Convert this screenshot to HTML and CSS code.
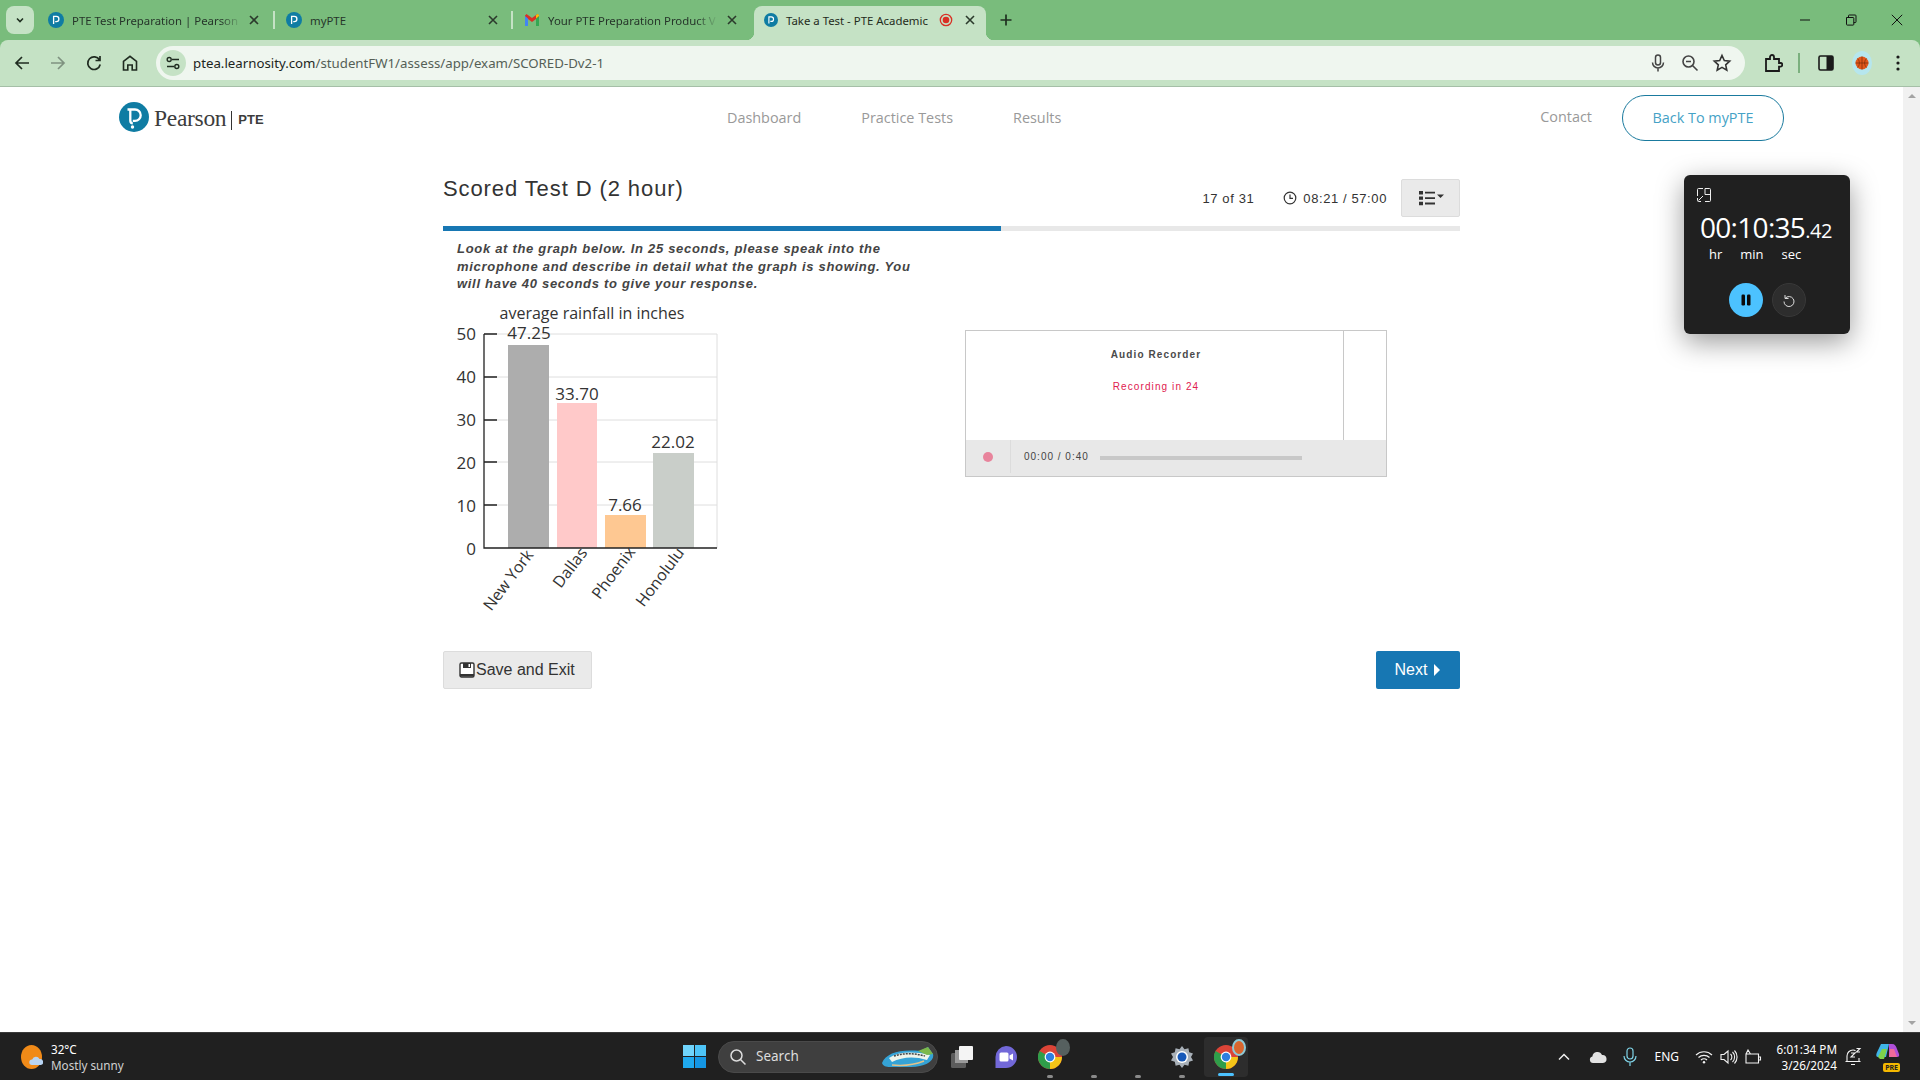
FILE: index.html
```html
<!DOCTYPE html>
<html lang="en">
<head>
<meta charset="utf-8">
<title>Take a Test - PTE Academic</title>
<link rel="stylesheet" href="styles.css">
</head>
<body>
<svg class="defs" width="0" height="0" aria-hidden="true">
  <defs>
    <symbol id="fav" viewBox="0 0 16 16">
      <circle cx="8" cy="8" r="8" fill="#0f7ca3"/>
      <path d="M5.600 12V4.400h2.700a2.600 2.600 0 0 1 0 5.200H7.200" fill="none" stroke="#fff" stroke-width="1.300"/>
    </symbol>
    <symbol id="x" viewBox="0 0 16 16">
      <path d="M4 4l8 8M12 4l-8 8" stroke="#2b3a2c" stroke-width="1.600" fill="none"/>
    </symbol>
    <symbol id="chrome" viewBox="0 0 24 24">
      <circle cx="12" cy="12" r="12" fill="#db4437"/>
      <path d="M12 12 1.600 6A12 12 0 0 0 12 24L18 13.500Z" fill="#2f9e4a"/>
      <path d="M12 12h12A12 12 0 0 1 12 24Z" fill="#f5c518"/>
      <circle cx="12" cy="12" r="5.400" fill="#fff"/>
      <circle cx="12" cy="12" r="4.200" fill="#2f7fe0"/>
    </symbol>
  </defs>
</svg>

<header class="browser">
  <div class="tabstrip">
    <div class="tab-menu">
      <svg viewBox="0 0 12 12" width="12" height="12"><path d="M3 4.500l3 3 3-3" fill="none" stroke="#1f2f20" stroke-width="1.600"/></svg>
    </div>
    <div class="tab tab-first">
      <svg class="favicon"><use href="#fav"/></svg>
      <span class="tab-title tab-fade">PTE Test Preparation | Pearson P</span>
      <svg class="tab-x"><use href="#x"/></svg>
    </div>
    <i class="tab-sep"></i>
    <div class="tab tab-second">
      <svg class="favicon"><use href="#fav"/></svg>
      <span class="tab-title">myPTE</span>
      <svg class="tab-x"><use href="#x"/></svg>
    </div>
    <i class="tab-sep"></i>
    <div class="tab tab-third">
      <svg class="favicon" viewBox="0 0 16 16">
        <path d="M1 3.500V14h3V7l4 3 4-3v7h3V3.500L13.500 2 8 6 2.500 2Z" fill="#d93025"/>
        <path d="M1 4v10h3V6.500Z" fill="#4285f4"/>
        <path d="M15 4v10h-3V6.500Z" fill="#34a853"/>
        <path d="M12 6.500l3-2.500V3l-1.500-1L12 3.200Z" fill="#fbbc04"/>
      </svg>
      <span class="tab-title tab-fade">Your PTE Preparation Product V</span>
      <svg class="tab-x"><use href="#x"/></svg>
    </div>
    <div class="tab tab-active">
      <svg class="favicon favicon-small"><use href="#fav"/></svg>
      <span class="tab-title">Take a Test - PTE Academic</span>
      <svg class="tab-rec" viewBox="0 0 14 14" width="14" height="14"><circle cx="7" cy="7" r="5.700" fill="none" stroke="#d93025" stroke-width="1.300"/><circle cx="7" cy="7" r="3.300" fill="#d93025"/></svg>
      <svg class="tab-x"><use href="#x"/></svg>
    </div>
    <svg class="new-tab" viewBox="0 0 16 16" width="16" height="16"><path d="M8 2.500v11M2.500 8h11" stroke="#1f2f20" stroke-width="1.700"/></svg>
    <div class="win-controls">
      <span class="win-btn"><svg viewBox="0 0 12 12" width="12" height="12"><path d="M1 6h10" stroke="#111" stroke-width="1"/></svg></span>
      <span class="win-btn"><svg viewBox="0 0 12 12" width="12" height="12"><path d="M1.500 3.500h6.500a.8.800 0 0 1 .8.800v6a.8.800 0 0 1-.8.800H2.300a.8.800 0 0 1-.8-.8ZM3.500 3.500V1.800a.8.800 0 0 1 .8-.8h5.900a.8.800 0 0 1 .8.800v6a.8.800 0 0 1-.8.800H8.800" fill="none" stroke="#111"/></svg></span>
      <span class="win-btn"><svg viewBox="0 0 12 12" width="12" height="12"><path d="M.8.800l10.400 10.400M11.200.8.800 11.200" stroke="#111" stroke-width="1"/></svg></span>
    </div>
  </div>
  <div class="toolbar">
    <svg class="tool" viewBox="0 0 20 20"><path d="M17 10H4M10 4l-6 6 6 6" fill="none" stroke="#1f2b20" stroke-width="1.700"/></svg>
    <svg class="tool" viewBox="0 0 20 20"><path d="M3 10h13M10 4l6 6-6 6" fill="none" stroke="#7f9280" stroke-width="1.700"/></svg>
    <svg class="tool" viewBox="0 0 20 20"><path d="M15.500 7A6.300 6.300 0 1 0 16.200 11.500M16 3v4.500h-4.500" fill="none" stroke="#1f2b20" stroke-width="1.700"/></svg>
    <svg class="tool" viewBox="0 0 20 20"><path d="M3.500 17V8.500L10 3.300l6.500 5.200V17h-4.300v-5H7.800v5Z" fill="none" stroke="#1f2b20" stroke-width="1.600"/></svg>
    <div class="omnibox">
      <span class="tune">
        <svg viewBox="0 0 16 16" width="16" height="16"><path d="M7 4.500h7M2 11.500h7" stroke="#1f2b20" stroke-width="1.400"/><circle cx="4.200" cy="4.500" r="2" fill="none" stroke="#1f2b20" stroke-width="1.400"/><circle cx="11.800" cy="11.500" r="2" fill="none" stroke="#1f2b20" stroke-width="1.400"/></svg>
      </span>
      <span class="url"><b class="url-host">ptea.learnosity.com</b>/studentFW1/assess/app/exam/SCORED-Dv2-1</span>
      <span class="omni-icons">
        <svg class="tool" viewBox="0 0 20 20"><rect x="7.500" y="2" width="5" height="10" rx="2.500" fill="none" stroke="#444" stroke-width="1.500"/><path d="M4.500 9.500a5.500 5.500 0 0 0 11 0M10 15v3.500" fill="none" stroke="#444" stroke-width="1.500"/></svg>
        <svg class="tool" viewBox="0 0 20 20"><circle cx="8.500" cy="8.500" r="5.500" fill="none" stroke="#444" stroke-width="1.600"/><path d="M12.500 12.500l5 5M6 8.500h5" stroke="#444" stroke-width="1.600"/></svg>
        <svg class="tool" viewBox="0 0 20 20"><path d="M10 2.500l2.300 5 5.400.6-4 3.700 1.100 5.400-4.800-2.800-4.800 2.800 1.100-5.400-4-3.700 5.400-.6Z" fill="none" stroke="#333" stroke-width="1.600"/></svg>
      </span>
    </div>
    <svg class="tool tool-ext" viewBox="0 0 20 20"><path d="M3 6h4V4a2 2 0 0 1 4 0v2h5v4h1.500a1.800 1.800 0 0 1 0 3.600H16V18H3Z" fill="none" stroke="#1a1a1a" stroke-width="1.800"/></svg>
    <i class="tool-sep"></i>
    <svg class="tool tool-side" viewBox="0 0 20 20"><rect x="3" y="3" width="14" height="14" rx="1.500" fill="none" stroke="#1a1a1a" stroke-width="1.600"/><rect x="10.500" y="3" width="6.500" height="14" fill="#1a1a1a"/></svg>
    <span class="avatar"><svg viewBox="0 0 14 14" width="14" height="14"><circle cx="7" cy="7" r="6.500" fill="#e2571c"/><path d="M7 .5v13M.5 7h13M2.500 2.500C5 5 5 9 2.500 11.500M11.500 2.500C9 5 9 9 11.500 11.500" fill="none" stroke="#7a2c0a" stroke-width=".7"/></svg></span>
    <svg class="tool tool-menu" viewBox="0 0 20 20"><circle cx="10" cy="4" r="1.600" fill="#1a1a1a"/><circle cx="10" cy="10" r="1.600" fill="#1a1a1a"/><circle cx="10" cy="16" r="1.600" fill="#1a1a1a"/></svg>
  </div>
</header>

<div class="viewport">
  <main class="page">
    <nav class="site-head">
      <div class="brand">
        <svg class="brand-mark" viewBox="0 0 30 30" width="30" height="30">
          <circle cx="15" cy="15" r="15" fill="#0f7ca3"/>
          <path d="M8.500 7.500H16a5.700 5.700 0 0 1 0 11.400h-2.200" fill="none" stroke="#fff" stroke-width="2.300"/>
          <path d="M11.300 7.500V18.500c0 1.800 .8 2.800 2.500 2.800" fill="none" stroke="#fff" stroke-width="2.300"/>
          <circle cx="13.500" cy="25" r="1.700" fill="#fff"/>
        </svg>
        <span class="brand-name">Pearson</span>
        <i class="brand-bar"></i>
        <span class="brand-pte">PTE</span>
      </div>
      <ul class="site-links">
        <li>Dashboard</li>
        <li>Practice Tests</li>
        <li>Results</li>
      </ul>
      <div class="site-right">
        <span class="contact">Contact</span>
        <span class="back-btn">Back To myPTE</span>
      </div>
    </nav>

    <section class="exam">
      <div class="exam-head">
        <h1 class="exam-title">Scored Test D (2 hour)</h1>
        <div class="exam-meta">
          <span class="count">17 of 31</span>
          <span class="clock">
            <svg viewBox="0 0 14 14" width="14" height="14"><circle cx="7" cy="7" r="5.800" fill="none" stroke="#333" stroke-width="1.200"/><path d="M7 3.500V7.400H10" fill="none" stroke="#333" stroke-width="1.200"/></svg>
            08:21 / 57:00
          </span>
          <span class="list-btn">
            <svg viewBox="0 0 26 16" width="26" height="16"><path d="M1 1h4v3.400H1ZM1 6.400h4v3.400H1ZM1 11.800h4v3.400H1Z" fill="#333"/><path d="M7 2.700h10M7 8.100h10M7 13.500h10" stroke="#333" stroke-width="1.800"/><path d="M19 4.500h7l-3.500 3.500Z" fill="#333"/></svg>
          </span>
        </div>
      </div>
      <div class="progress"><div class="progress-fill" style="width:54.900%"></div></div>

      <div class="exam-body">
        <div class="col-left">
          <p class="prompt">Look at the graph below. In 25 seconds, please speak into the microphone and describe in detail what the graph is showing. You will have 40 seconds to give your response.</p>
          <svg class="chart" viewBox="430 295 320 330" width="320" height="330">
            <g class="grid-lines">
              <path d="M484 334H717M484 377H717M484 420H717M484 462H717M484 505H717M717 334V548"/>
            </g>
            <rect x="508" y="345" width="41" height="203" fill="#adadad"/>
            <rect x="557" y="403" width="40" height="145" fill="#ffc9c9"/>
            <rect x="605" y="515" width="41" height="33" fill="#fec892"/>
            <rect x="653" y="453" width="41" height="95" fill="#c9cec9"/>
            <path class="axis" d="M484 334V548H717M484 334H497M484 377H497M484 420H497M484 462H497M484 505H497"/>
            <g class="chart-text">
              <text x="592" y="319" text-anchor="middle" class="chart-title">average rainfall in inches</text>
              <text x="476" y="340" text-anchor="end">50</text>
              <text x="476" y="383" text-anchor="end">40</text>
              <text x="476" y="426" text-anchor="end">30</text>
              <text x="476" y="469" text-anchor="end">20</text>
              <text x="476" y="512" text-anchor="end">10</text>
              <text x="476" y="555" text-anchor="end">0</text>
              <text x="529" y="339" text-anchor="middle">47.25</text>
              <text x="577" y="400" text-anchor="middle">33.70</text>
              <text x="625" y="511" text-anchor="middle">7.66</text>
              <text x="673" y="448" text-anchor="middle">22.02</text>
              <text class="chart-cat" text-anchor="end" transform="translate(534 555) rotate(-53)">New York</text>
              <text class="chart-cat" text-anchor="end" transform="translate(588 553) rotate(-53)">Dallas</text>
              <text class="chart-cat" text-anchor="end" transform="translate(636 552) rotate(-53)">Phoenix</text>
              <text class="chart-cat" text-anchor="end" transform="translate(685 553) rotate(-53)">Honolulu</text>
            </g>
          </svg>
        </div>
        <div class="col-right">
          <div class="recorder">
            <div class="rec-top">
              <div class="rec-main">
                <div class="rec-title">Audio Recorder</div>
                <div class="rec-count">Recording in 24</div>
              </div>
              <div class="rec-side"></div>
            </div>
            <div class="rec-bar">
              <div class="rec-dot-cell"><i class="rec-dot"></i></div>
              <span class="rec-time">00:00 / 0:40</span>
              <i class="rec-track"></i>
            </div>
          </div>
        </div>
      </div>

      <div class="exam-actions">
        <span class="btn btn-save">
          <svg viewBox="0 0 16 16" width="16" height="16"><path d="M1 2.500A1.500 1.500 0 0 1 2.500 1h11A1.500 1.500 0 0 1 15 2.500v11a1.500 1.500 0 0 1-1.500 1.500h-11A1.500 1.500 0 0 1 1 13.500Z" fill="#fff" stroke="#333" stroke-width="1.400"/><path d="M4 1h8v5H4Z" fill="#333"/><path d="M9.500 2h1.500v3H9.500Z" fill="#fff"/><path d="M1 12h14v2.500H1Z" fill="#333"/></svg>Save and Exit
        </span>
        <span class="btn btn-next">Next<svg viewBox="0 0 8 14" width="8" height="14"><path d="M1 1l6 6-6 6Z" fill="#fff"/></svg></span>
      </div>
    </section>
  </main>
  <aside class="scrollbar">
    <i class="sb-up"></i>
    <i class="sb-down"></i>
  </aside>
</div>

<aside class="stopwatch">
  <svg class="sw-expand" viewBox="0 0 14 14" width="14" height="14"><path d="M6 .5H1.500a1 1 0 0 0-1 1V8M8 13.500h4.500a1 1 0 0 0 1-1V1.500a1 1 0 0 0-1-1H8M.5 10v2.500a1 1 0 0 0 1 1H4M1.500 12.500 6 8M8 .5v6h5.500" fill="none" stroke="#eee" stroke-width="1"/></svg>
  <div class="sw-time">00:10:35<small>.42</small></div>
  <div class="sw-labels"><span>hr</span><span>min</span><span>sec</span></div>
  <div class="sw-buttons">
    <span class="sw-pause"><svg viewBox="0 0 14 14" width="14" height="14"><rect x="2.500" y="1.500" width="3.500" height="11" rx="1.200" fill="#0b0b0b"/><rect x="8" y="1.500" width="3.500" height="11" rx="1.200" fill="#0b0b0b"/></svg></span>
    <span class="sw-reset"><svg viewBox="0 0 14 14" width="14" height="14"><path d="M3 2v3.500h3.500M3.200 5.300A5 5 0 1 1 2 8.500" fill="none" stroke="#ddd" stroke-width="1"/></svg></span>
  </div>
</aside>

<footer class="taskbar">
  <div class="tb-weather">
    <svg viewBox="0 0 22 24" width="22" height="24">
      <ellipse cx="10.500" cy="12" rx="10.500" ry="12" fill="#f08a18"/>
      <path d="M11 20a2.800 2.800 0 0 1 .2-5.600 4 4 0 0 1 7.300-.4 3 3 0 0 1 1.200 6Z" fill="#b8d4f2"/>
    </svg>
    <div class="tb-weather-text"><span class="tb-temp">32°C</span><span class="tb-cond">Mostly sunny</span></div>
  </div>
  <svg class="tb-win" viewBox="0 0 23 23" width="23" height="23">
    <rect width="11" height="11" fill="#6fd4fb"/><rect x="12" width="11" height="11" fill="#4dc4f7"/><rect y="12" width="11" height="11" fill="#1fa9ee"/><rect x="12" y="12" width="11" height="11" fill="#1496e4"/>
  </svg>
  <div class="tb-search">
    <svg viewBox="0 0 18 18" width="18" height="18"><circle cx="7.500" cy="7.500" r="5.500" fill="none" stroke="#ddd" stroke-width="1.500"/><path d="M11.500 11.500l5 5" stroke="#ddd" stroke-width="1.500"/></svg>
    <span class="tb-search-text">Search</span>
    <svg class="tb-search-art" viewBox="0 0 52 22" width="52" height="22">
      <path d="M0 17C4 7 18 3 38 5L46 1l5 7c2 7-8 13-22 13H8C4 21 1 20 0 17Z" fill="#35a3d6"/>
      <path d="M7 12C16 6 30 5 48 9l-3 5C32 10 20 11 10 16Z" fill="#eef4ea"/>
      <path d="M12 10c9-3 20-3 31 0" fill="none" stroke="#444" stroke-width="1.500" stroke-dasharray="2 1"/>
      <path d="M36 5L46 1l5 7-6 1Z" fill="#7cb84a"/>
      <path d="M10 19c10 1 22 0 32-4" fill="none" stroke="#e2c28a" stroke-width="1.500"/>
    </svg>
  </div>
  <div class="tb-apps">
    <span class="tb-app">
      <svg viewBox="0 0 24 24" width="24" height="24"><rect x="1" y="8" width="15" height="15" rx="1.500" fill="#5c5c5c"/><rect x="5" y="5" width="13" height="13" fill="#9a9a9a"/><rect x="9" y="1" width="14" height="14" rx="1" fill="#f4f4f4"/></svg>
    </span>
    <span class="tb-app">
      <svg viewBox="0 0 24 24" width="24" height="24"><path d="M12 1a11 11 0 0 1 0 22H1.500v-11A11 11 0 0 1 12 1Z" fill="#7268d8"/><rect x="5.500" y="7.500" width="9" height="9" rx="1.500" fill="#fff"/><path d="M15.500 10.500l3.500-2v7l-3.500-2Z" fill="#fff"/></svg>
    </span>
    <span class="tb-app tb-open">
      <svg width="24" height="24"><use href="#chrome"/></svg>
      <i class="tb-avatar tb-avatar-photo"></i>
    </span>
    <span class="tb-app tb-open"></span>
    <span class="tb-app tb-open"></span>
    <span class="tb-app tb-open">
      <svg viewBox="0 0 24 24" width="24" height="24"><path d="M12 1l2.500 3.200 3.900-1 .8 4 3.800 1.400L21 12l2 3.400-3.800 1.400-.8 4-3.900-1L12 23l-2.500-3.200-3.900 1-.8-4L1 15.400 3 12 1 8.600l3.800-1.400.8-4 3.900 1Z" fill="#a8b0b8"/><circle cx="12" cy="12" r="6" fill="#fff"/><circle cx="12" cy="12" r="4.500" fill="#1658b8"/></svg>
    </span>
    <span class="tb-app tb-active">
      <svg width="24" height="24"><use href="#chrome"/></svg>
      <i class="tb-avatar tb-avatar-ball"></i>
    </span>
  </div>
  <div class="tray">
    <svg class="tray-chev" viewBox="0 0 14 14" width="14" height="14"><path d="M2 9.500 7 4.500l5 5" fill="none" stroke="#eee" stroke-width="1.500"/></svg>
    <svg class="tray-cloud" viewBox="0 0 18 14" width="18" height="14"><path d="M4 13a3.300 3.300 0 0 1-.6-6.500A5 5 0 0 1 13 5a4 4 0 0 1 1 8Z" fill="#e2e2e2"/></svg>
    <svg class="tray-mic" viewBox="0 0 14 20" width="14" height="20"><rect x="4" y="1" width="6" height="11" rx="3" fill="none" stroke="#7fd4e8" stroke-width="1.200"/><path d="M1 9a6 6 0 0 0 12 0M7 15v4" fill="none" stroke="#7fd4e8" stroke-width="1.200"/></svg>
    <span class="tray-lang">ENG</span>
    <svg class="tray-wifi" viewBox="0 0 18 14" width="18" height="14"><path d="M1 5a11.500 11.500 0 0 1 16 0M3.500 7.500a8 8 0 0 1 11 0M6 10a4.300 4.300 0 0 1 6 0" fill="none" stroke="#f2f2f2" stroke-width="1.200"/><circle cx="9" cy="12.300" r="1.200" fill="#f2f2f2"/></svg>
    <svg class="tray-vol" viewBox="0 0 18 16" width="18" height="16"><path d="M1 5.500h3L8 2v12L4 10.500H1Z" fill="none" stroke="#f2f2f2" stroke-width="1.100"/><path d="M10.500 5a4 4 0 0 1 0 6M12.500 3a7 7 0 0 1 0 10M14.500 1.500a9.500 9.500 0 0 1 0 13" fill="none" stroke="#f2f2f2" stroke-width="1.100"/></svg>
    <svg class="tray-batt" viewBox="0 0 18 16" width="18" height="16"><path d="M2 5h12.500v9H2ZM14.500 8h2v3h-2M2 5l2-4 2.500 4" fill="none" stroke="#f2f2f2" stroke-width="1.100"/></svg>
    <div class="tray-clock"><span>6:01:34 PM</span><span>3/26/2024</span></div>
    <svg class="tray-bell" viewBox="0 0 18 20" width="18" height="20"><path d="M3 14V9a6 6 0 0 1 6-6M9 3c1.500 0 2 .3 2.500.8M15 14v-3M1.500 14.500h15M7 17.500h4" fill="none" stroke="#f2f2f2" stroke-width="1.100"/><path d="M7 6h4l-4 4h4M12.500 1.500h3.500l-3.500 3.500h3.500" fill="none" stroke="#f2f2f2" stroke-width="1.100"/></svg>
    <span class="tray-copilot">
      <svg viewBox="0 0 24 20" width="24" height="20"><path d="M5 1h8l-3 13H2C0 14 0 12 .7 10Z" fill="#3fb4e8"/><path d="M13 1h3c3 0 4 2 5 5l2 5c.5 2 0 3-2 3h-8Z" fill="#b04fd8"/><path d="M2 14l4-8h5l-3 10H4Z" fill="#7fd14a"/><path d="M14 6h4l3 8h-8Z" fill="#f06a9a"/></svg>
      <b class="tray-pre">PRE</b>
    </span>
  </div>
</footer>
</body>
</html>
```

FILE: styles.css
```css
* { box-sizing: border-box; }
html, body { margin: 0; height: 100%; }
body {
  display: flex;
  flex-direction: column;
  height: 1080px;
  overflow: hidden;
  position: relative;
  background: #fff;
  font-family: "Liberation Sans", Arial, sans-serif;
  color: #333;
}
.defs { position: absolute; }
i { display: block; }

/* browser chrome */
.browser { background: #79bc7c; flex: none; font-family: "Noto Sans", sans-serif; }
.tabstrip { display: flex; align-items: stretch; height: 40px; padding: 6px 0 0 6px; }
.tab-menu {
  width: 28px; height: 28px; margin-right: 6px; border-radius: 8px; background: #c5e2c5;
  display: flex; align-items: center; justify-content: center;
}
.tab { display: flex; align-items: center; height: 28px; font-size: 11.400px; color: #26352a; }
.tab-first { width: 233px; padding: 0 11px 0 8px; }
.tab-second { width: 236px; padding: 0 10px 0 11px; }
.tab-third { width: 233px; padding: 0 6px 0 11px; margin-right: 8px; }
.tab-active {
  width: 232px; height: 34px; padding: 0 8px 6px 10px; background: #c5e2c5;
  border-radius: 8px 8px 0 0; position: relative; color: #1f2b20;
}
.tab-active::before, .tab-active::after {
  content: ""; position: absolute; bottom: 0; width: 8px; height: 8px;
}
.tab-active::before { left: -8px; background: radial-gradient(circle at 0 0, transparent 8px, #c5e2c5 8.500px); }
.tab-active::after { right: -8px; background: radial-gradient(circle at 100% 0, transparent 8px, #c5e2c5 8.500px); }
.favicon { width: 16px; height: 16px; flex: none; margin-right: 8px; }
.favicon-small { width: 14px; margin-right: 8px; }
.tab-title { flex: 1; white-space: nowrap; min-width: 0; }
.tab-fade { -webkit-mask-image: linear-gradient(90deg, #000 calc(100% - 22px), transparent 100%); mask-image: linear-gradient(90deg, #000 calc(100% - 22px), transparent 100%); flex: none; width: 170px; margin-right: auto; }
.tab-x { width: 16px; height: 16px; flex: none; }
.tab-rec { flex: none; margin: 0 9px 0 6px; }
.tab-sep { width: 2px; height: 18px; margin-top: 5px; background: #c5e2c5; }
.new-tab { margin: 6px 0 0 12px; }
.win-controls { display: flex; margin-left: auto; margin-top: -6px; }
.win-btn { width: 46px; height: 40px; display: flex; align-items: center; justify-content: center; }

.toolbar {
  display: flex; align-items: center; height: 47px; padding: 0 0 1px 12px;
  background: #c5e2c5; border-bottom: 1px solid #a5bfa7; border-radius: 8px 8px 0 0;
}
.tool { width: 20px; height: 20px; flex: none; margin-right: 16px; }
.omnibox {
  flex: 1; height: 34px; display: flex; align-items: center; padding: 0 1px 0 4px;
  background: #eff6ef; border-radius: 17px; margin-right: 18px;
}
.tune {
  width: 26px; height: 26px; border-radius: 50%; background: #c5e2c5; flex: none;
  display: flex; align-items: center; justify-content: center; margin-right: 7px;
}
.url { font-size: 13.260px; color: #555f56; white-space: nowrap; }
.url-host { font-weight: 400; color: #1c251d; }
.omni-icons { display: flex; margin-left: auto; }
.omni-icons .tool { margin-right: 12px; }
.tool-ext { margin-right: 15px; }
.tool-sep { width: 2px; height: 20px; background: #7bb07e; margin-right: 16px; flex: none; }
.avatar {
  width: 20px; height: 24px; border-radius: 50%; background: #b6e6ee; flex: none; margin-right: 16px;
  display: flex; align-items: center; justify-content: center;
}
.tool-side { margin-right: 16px; }
.tool-menu { margin-right: 12px; }

/* page */
.viewport { flex: 1; display: flex; min-height: 0; }
.page { flex: 1; min-width: 0; }
.scrollbar {
  width: 17px; background: #f1f1f1; display: flex; flex-direction: column;
  justify-content: space-between; align-items: center; padding: 7px 0;
}
.sb-up, .sb-down { width: 0; height: 0; border-left: 4px solid transparent; border-right: 4px solid transparent; }
.sb-up { border-bottom: 4px solid #a3a3a3; }
.sb-down { border-top: 4px solid #a3a3a3; }

.site-head {
  height: 73px; padding: 8px 119px 19px 119px; display: flex; align-items: center;
  font-family: "Open Sans", sans-serif; font-size: 14.400px;
}
.brand { display: flex; align-items: center; width: 608px; flex: none; color: #3c3c3c; }
.brand-mark { flex: none; margin-right: 5px; margin-top: -2px; }
.brand-name { font-family: "Liberation Serif", serif; font-size: 23.500px; letter-spacing: -.3px; }
.brand-bar { width: 1px; height: 19px; background: #333; margin: 4px 6px 0 5px; }
.brand-pte { font-family: "Liberation Sans", sans-serif; font-weight: 700; font-size: 13px; margin-top: 3px; }
.site-links { display: flex; gap: 60px; list-style: none; margin: -2px 0 0; padding: 0; color: #999; }
.site-right { display: flex; align-items: center; gap: 30px; margin-left: auto; }
.contact { color: #999; margin-top: -4px; }
.back-btn {
  width: 162px; height: 46px; border: 1px solid #1a7a9e; border-radius: 23px; padding-bottom: 2px;
  display: flex; align-items: center; justify-content: center; color: #45a2c6;
}

.exam { width: 1017px; margin-left: 443px; }
.exam-head { display: flex; justify-content: space-between; height: 66px; }
.exam-title { margin: 16px 0 0; font-size: 22px; line-height: 26px; font-weight: 400; letter-spacing: .9px; color: #333; }
.exam-meta { display: flex; align-items: center; font-size: 13px; letter-spacing: .6px; margin-top: 19px; height: 38px; }
.count { margin-right: 29px; }
.clock { display: flex; align-items: center; gap: 6px; margin-right: 14px; }
.list-btn {
  width: 59px; height: 38px; background: #eaeaea; border: 1px solid #dcdcdc; border-radius: 2px;
  display: flex; align-items: center; justify-content: center;
}
.progress { height: 5px; background: #e8e8e8; }
.progress-fill { height: 100%; background: #1777b3; }

.exam-body { display: flex; height: 420px; }
.col-left { width: 522px; padding-top: 9px; flex: none; }
.prompt {
  width: 470px; margin: 0 0 0 14px; font-size: 13px; line-height: 17.500px; font-weight: 700;
  font-style: italic; letter-spacing: .7px; color: #444;
}
.chart { display: block; margin: 2px 0 0 -13px; }
.grid-lines path { fill: none; stroke: #dedede; stroke-width: 1; }
.axis { fill: none; stroke: #222; stroke-width: 1.300; }
.chart-text text { font-family: "Open Sans", sans-serif; font-size: 17px; fill: #333; }
.chart-text .chart-title { font-size: 16px; }
.chart-text .chart-cat { font-size: 16px; }
.col-right { padding-top: 99px; }
.recorder { width: 422px; height: 147px; border: 1px solid #c8c8c8; display: flex; flex-direction: column; }
.rec-top { flex: 1; display: flex; }
.rec-main { flex: 1; text-align: center; padding: 18px 0 0 3px; }
.rec-side { width: 43px; border-left: 1px solid #c8c8c8; }
.rec-title { font-size: 10px; line-height: 12px; font-weight: 700; letter-spacing: 1.100px; color: #4a4a4a; }
.rec-count { margin-top: 20px; font-size: 10px; line-height: 12px; letter-spacing: 1.100px; color: #e0204f; }
.rec-bar { height: 36px; padding-bottom: 3px; background: #e8e8e8; display: flex; align-items: center; }
.rec-dot-cell {
  width: 45px; height: 33px; border-right: 1px solid #dcdcdc; display: flex; align-items: center; justify-content: center;
}
.rec-dot { width: 10px; height: 10px; border-radius: 50%; background: #e8849c; }
.rec-time { margin-left: 13px; font-size: 10px; letter-spacing: 1px; color: #444; }
.rec-track { width: 202px; height: 4px; margin: 2px 0 0 11px; background: #c8c8c8; }

.exam-actions { display: flex; justify-content: space-between; height: 38px; }
.btn { display: flex; align-items: center; height: 38px; font-size: 16px; border-radius: 2px; }
.btn-save { width: 149px; padding-left: 15px; gap: 1px; background: #eaeaea; border: 1px solid #dcdcdc; color: #333; }
.btn-next { width: 84px; justify-content: center; gap: 6px; background: #1777b3; color: #fff; }

/* floating stopwatch */
.stopwatch {
  position: absolute; left: 1684px; top: 175px; width: 166px; height: 159px;
  background: #202020; border-radius: 6px; padding: 13px 0 0; color: #fff;
  box-shadow: 0 8px 28px rgba(0,0,0,.4); font-family: "Open Sans", sans-serif;
}
.sw-expand { display: block; margin-left: 13px; }
.sw-time { margin: 9px 0 0 16px; font-size: 28px; line-height: 32px; font-weight: 400; white-space: nowrap; letter-spacing: -.7px; }
.sw-time small { font-size: 20px; letter-spacing: -.4px; }
.sw-labels { display: flex; font-size: 13px; line-height: 16px; margin-top: -1px; padding-left: 25px; gap: 18px; }
.sw-buttons { display: flex; justify-content: center; gap: 9px; margin-top: 21px; }
.sw-pause, .sw-reset {
  width: 34px; height: 34px; border-radius: 50%; display: flex; align-items: center; justify-content: center;
}
.sw-pause { background: #4cc2ff; }
.sw-reset { background: #2d2d2d; border: 1px solid #383838; }

/* taskbar */
.taskbar {
  flex: none; height: 48px; display: flex; align-items: center; background: #202020;
  border-top: 1px solid #3a3a3a; font-family: "Noto Sans", sans-serif; color: #fff; font-size: 11.700px;
}
.tb-weather { width: 683px; padding-left: 21px; display: flex; align-items: center; flex: none; }
.tb-weather-text { display: flex; flex-direction: column; margin-left: 8px; line-height: 16px; }
.tb-cond { color: #d0d0d0; }
.tb-win { flex: none; margin-right: 12px; }
.tb-search {
  width: 220px; height: 32px; border-radius: 16px; background: #3f3f3f; border: 1px solid #4a4a4a;
  display: flex; align-items: center; padding: 0 3px 0 10px; flex: none; font-size: 13.500px;
}
.tb-search-text { margin: -2px 0 0 9px; color: #ddd; }
.tb-search-art { margin-left: auto; }
.tb-apps { display: flex; margin-left: 2px; height: 48px; align-items: center; }
.tb-app {
  width: 44px; height: 40px; display: flex; align-items: center; justify-content: center; position: relative; flex: none;
}
.tb-open::after {
  content: ""; position: absolute; left: 19px; bottom: -1px; width: 6px; height: 3px; border-radius: 2px; background: #8a8a8a;
}
.tb-active { background: #2d2d2d; border-radius: 4px; }
.tb-active::after {
  content: ""; position: absolute; left: 14px; bottom: 1px; width: 16px; height: 3px; border-radius: 2px; background: #4cc2ff;
}
.tb-avatar { position: absolute; left: 28px; top: 2px; width: 14px; height: 17px; border-radius: 50%; }
.tb-avatar-photo { background: #56605f; }
.tb-avatar-ball { background: #d9662e; border: 2px solid #8fc9d6; }
.tray { display: flex; align-items: center; margin-left: auto; padding-right: 20px; }
.tray-chev { margin-right: 17.500px; }
.tray-cloud { margin-right: 16px; }
.tray-mic { margin-right: 17.700px; }
.tray-lang { font-size: 12px; margin-right: 16px; }
.tray-wifi { margin-right: 7px; }
.tray-vol { margin-right: 6px; }
.tray-batt { flex: none; }
.tray-clock { width: 75px; display: flex; flex-direction: column; align-items: flex-end; line-height: 16px; }
.tray-bell { margin: 0 7px; }
.tray-copilot { position: relative; width: 24px; height: 28px; margin-left: 7px; display: block; }
.tray-pre {
  position: absolute; right: 0; bottom: -1px; background: #f5b800; color: #222; font-size: 7px; line-height: 9px;
  padding: 0 2px; border-radius: 2px;
}
```
